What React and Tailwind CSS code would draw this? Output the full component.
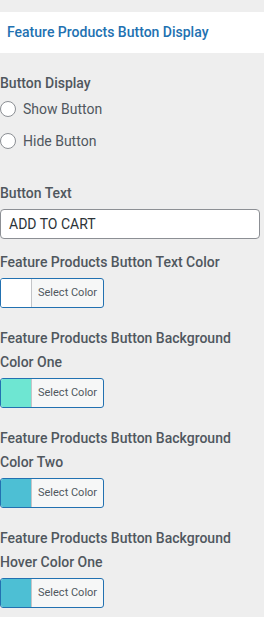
const groups = [
  { label: "Feature Products Button Text Color", color: "#ffffff" },
  { label: "Feature Products Button Background Color One", color: "#6ee6d2" },
  { label: "Feature Products Button Background Color Two", color: "#4dbfd4" },
  { label: "Feature Products Button Background Hover Color One", color: "#4dbfd4" },
];

function ColorButton({ color }) {
  return (
    <div className="flex h-[30px] w-[104px] items-stretch overflow-hidden rounded-[3px] border border-[#2271b1] bg-[#f6f7f7]">
      <span className="w-[31px] border-r border-[#c3c4c7]" style={{ background: color }} />
      <span className="flex flex-1 items-center pl-[6px] text-[11px] font-normal text-[#50575e]">Select Color</span>
    </div>
  );
}

function Radio({ label }) {
  return (
    <label className="flex h-[28px] items-center gap-[7px] text-[14px] text-[#50575e]">
      <span className="h-[16px] w-[16px] rounded-full border border-[#8c8f94] bg-white" />
      {label}
    </label>
  );
}

export default function App() {
  return (
    <div className="min-h-[617px] w-[264px] bg-[#eeeeee] pt-[12px] font-['Roboto',sans-serif]">
      <div className="flex h-[41px] items-center bg-white pl-[7px] text-[14px] font-medium text-[#2271b1]">
        Feature Products Button Display
      </div>

      <div className="pr-[4px]">
        <div className="mt-[18px] text-[14px] font-medium leading-[24px] text-[#50575e]">Button Display</div>
        <div className="flex flex-col gap-[4px]">
          <Radio label="Show Button" />
          <Radio label="Hide Button" />
        </div>

        <div className="mt-[26px] text-[14px] font-medium leading-[24px] text-[#50575e]">Button Text</div>
        <div className="mt-[4px] flex h-[30px] items-center rounded-[4px] border border-[#8c8f94] bg-white pl-[8px] text-[14px] text-[#2c3338]">
          ADD TO CART
        </div>

        {groups.map((g, i) => (
          <div key={i} className={i === 0 ? "mt-[11px]" : "mt-[18px]"}>
            <div className="mb-[4px] text-[14px] font-medium leading-[24px] text-[#50575e]">{g.label}</div>
            <ColorButton color={g.color} />
          </div>
        ))}
      </div>
    </div>
  );
}
